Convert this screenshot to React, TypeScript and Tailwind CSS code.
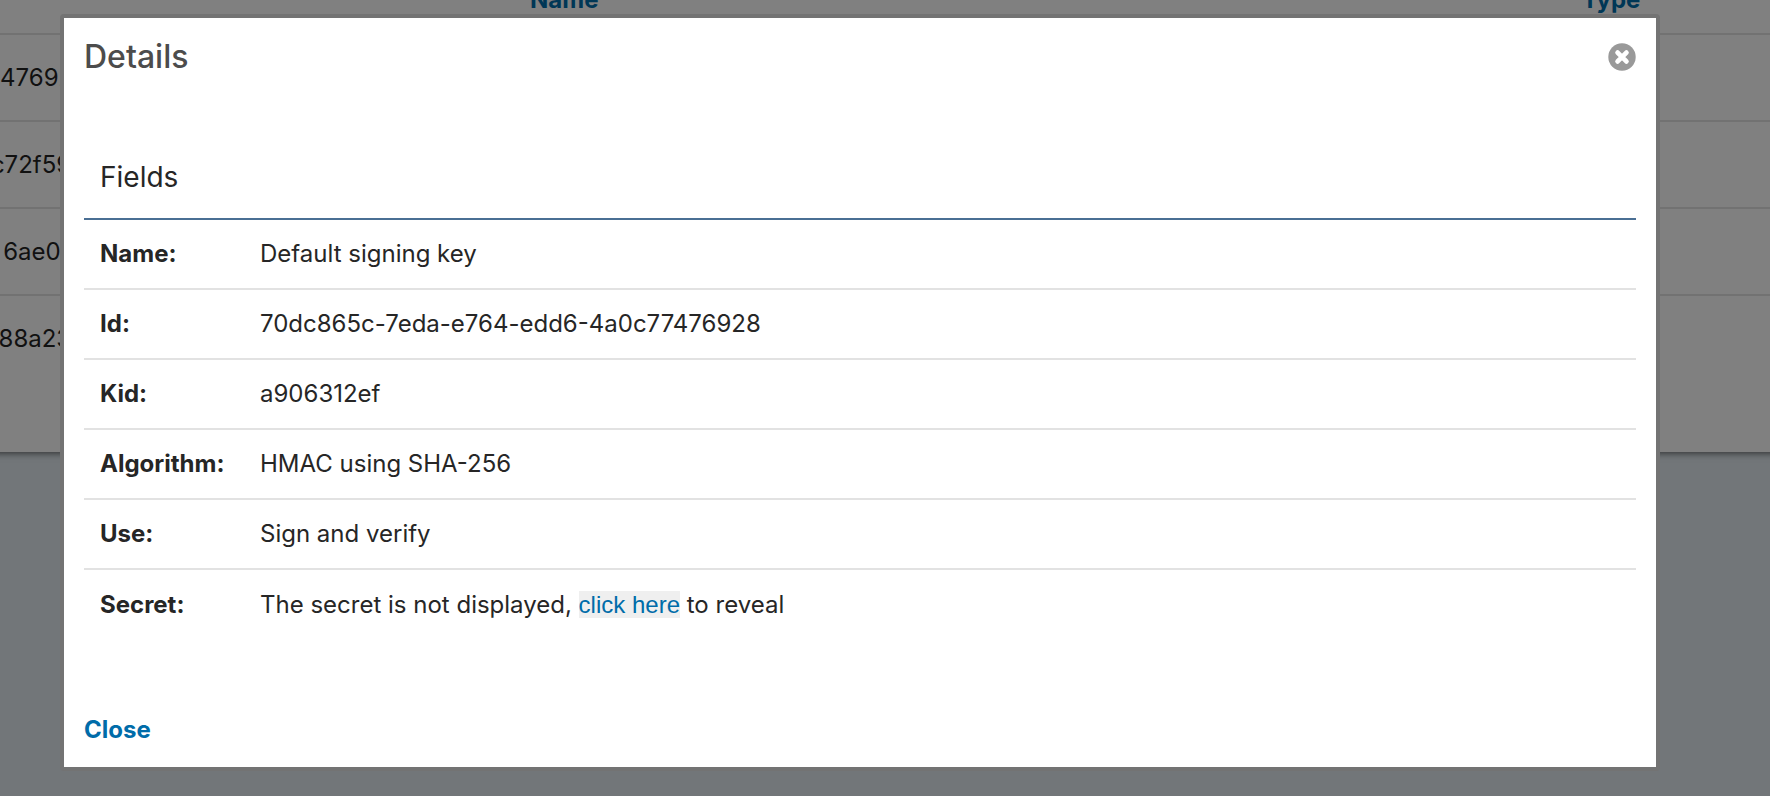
import React, { useState } from 'react';

const keys = [
  { id: '476928', name: '', type: '' },
  { id: '1b9ac72f59ff', name: '', type: '' },
  { id: '6ae0c7', name: '', type: '' },
  { id: 'c1e788a23ff', name: '', type: '' },
];

const fields = [
  { label: 'Name', value: 'Default signing key' },
  { label: 'Id', value: '70dc865c-7eda-e764-edd6-4a0c77476928' },
  { label: 'Kid', value: 'a906312ef' },
  { label: 'Algorithm', value: 'HMAC using SHA-256' },
  { label: 'Use', value: 'Sign and verify' },
];

function CloseIcon() {
  return (
    <svg viewBox="0 0 28 28" className="h-7 w-7" aria-hidden="true">
      <circle cx="14" cy="14" r="13.7" fill="#999999" />
      <path d="M9.6 9.6l8.8 8.8M18.4 9.6l-8.8 8.8" stroke="#ffffff" strokeWidth="4.8" strokeLinecap="round" />
    </svg>
  );
}

function KeyTable() {
  return (
    <div className="-mx-4 bg-[#808080] px-4 pb-[70px] shadow-[0_2px_6px_rgba(0,0,0,0.5)]">
      <table className="w-full table-fixed border-collapse text-left">
        <thead>
          <tr className="h-[34px] text-[#003756]">
            <th className="w-[530px]" />
            <th className="p-0 align-top font-bold"><div className="-mt-4">Name</div></th>
            <th className="w-[188px] p-0 align-top font-bold"><div className="-mt-4">Type</div></th>
          </tr>
        </thead>
        <tbody>
          {keys.map((key) => (
            <tr key={key.id} className="h-[87px] border-t-2 border-[#727272]">
              <td className="p-0">
                <div className="flex w-[88px] justify-end overflow-hidden">{key.id}</div>
              </td>
              <td>{key.name}</td>
              <td>{key.type}</td>
            </tr>
          ))}
        </tbody>
      </table>
    </div>
  );
}

export default function App() {
  const [revealed, setRevealed] = useState(false);
  const [open, setOpen] = useState(true);

  return (
    <div className="relative min-h-screen overflow-hidden bg-[#727679] font-['Inter','Liberation_Sans',sans-serif] text-2xl text-[#111111]">
      <KeyTable />

      {open && (
        <div className="absolute inset-0 pt-[14px] pr-[110px] pl-[60px]">
          <div
            role="dialog"
            aria-labelledby="dialog-title"
            className="rounded-sm border-4 border-[#737373] bg-white bg-clip-padding px-5 text-[#262626]"
          >
            <header className="flex h-[78px] items-center justify-between">
              <h1 id="dialog-title" className="text-[32px] font-medium text-[#4c4c4c]">Details</h1>
              <button type="button" aria-label="Close details" onClick={() => setOpen(false)}>
                <CloseIcon />
              </button>
            </header>

            <table className="mt-[41px] w-full border-collapse text-left">
              <thead>
                <tr className="h-[82px] border-b-2 border-[#4a6f94]">
                  <th colSpan={2} className="px-4 text-[28px] font-normal">Fields</th>
                </tr>
              </thead>
              <tbody>
                {fields.map((field) => (
                  <tr key={field.label} className="h-[70px] border-b-2 border-[#e2e2e2]">
                    <th scope="row" className="w-40 px-4 font-bold">{field.label}:</th>
                    <td className="px-4">{field.value}</td>
                  </tr>
                ))}
                <tr className="h-[70px]">
                  <th scope="row" className="w-40 px-4 font-bold">Secret:</th>
                  <td className="px-4">
                    {revealed ? (
                      '••••••••'
                    ) : (
                      <>
                        The secret is not displayed,{' '}
                        <button
                          type="button"
                          onClick={() => setRevealed(true)}
                          className="bg-[#efefef] font-['Liberation_Sans',sans-serif] leading-[27px] text-[#006ca9]"
                        >
                          click here
                        </button>{' '}
                        to reveal
                      </>
                    )}
                  </td>
                </tr>
              </tbody>
            </table>

            <footer className="pt-[75px] pb-[21px]">
              <button type="button" onClick={() => setOpen(false)} className="font-bold text-[#006ca9]">
                Close
              </button>
            </footer>
          </div>
        </div>
      )}
    </div>
  );
}
